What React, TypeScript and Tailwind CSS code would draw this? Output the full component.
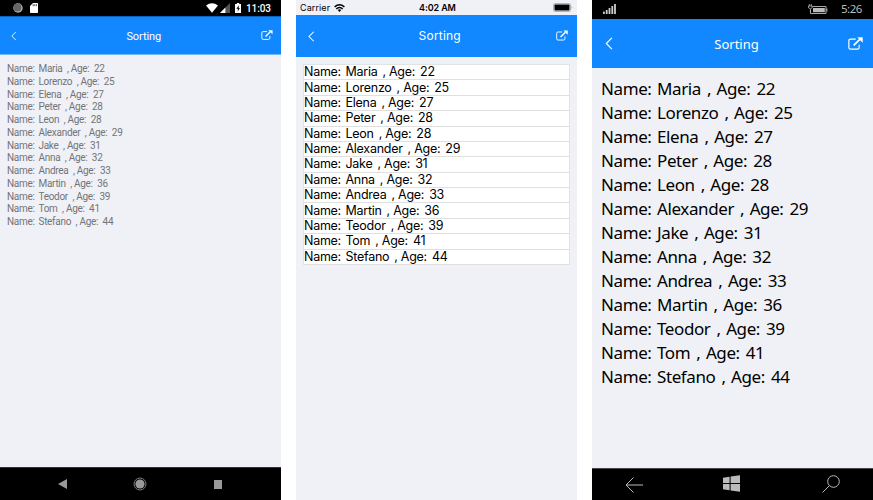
import React from "react";

const people: [string, number][] = [
  ["Maria", 22],
  ["Lorenzo", 25],
  ["Elena", 27],
  ["Peter", 28],
  ["Leon", 28],
  ["Alexander", 29],
  ["Jake", 31],
  ["Anna", 32],
  ["Andrea", 33],
  ["Martin", 36],
  ["Teodor", 39],
  ["Tom", 41],
  ["Stefano", 44],
];

function Back({ className }: { className: string }) {
  return (
    <svg viewBox="0 0 7 12" className={className} fill="none" stroke="white" strokeWidth="1.1">
      <path d="M6.2 0.8 L1 6 L6.2 11.2" />
    </svg>
  );
}

function External({ className }: { className: string }) {
  return (
    <svg viewBox="0 0 14 12" className={className} fill="none" stroke="white">
      <path
        d="M7.2 1.9 H2.4 Q0.8 1.9 0.8 3.4 V9.8 Q0.8 11.3 2.4 11.3 H8.9 Q10.4 11.3 10.4 9.8 V7.2"
        strokeWidth="1.1"
      />
      <path d="M5.3 7.8 L11 2.2" strokeWidth="1.7" />
      <path d="M8.6 0.2 H13.7 V5.2 Z" fill="white" stroke="none" />
    </svg>
  );
}

function AndroidPhone() {
  return (
    <section className="flex h-[500px] w-[281px] flex-col bg-[#eff1f6] font-['Roboto',sans-serif]">
      <div className="flex h-4 items-center bg-black pr-[11px] pl-[13px] text-white">
        <svg viewBox="0 0 10 10" className="h-[10px] w-[10px]">
          <circle cx="5" cy="5" r="4.7" fill="#b5b5b5" />
          <circle cx="4.4" cy="4.6" r="4" fill="#666" />
        </svg>
        <svg viewBox="0 0 8 10" className="ml-[7px] h-[10px] w-2">
          <path d="M3 0 H7.2 Q8 0 8 0.8 V9.2 Q8 10 7.2 10 H0.8 Q0 10 0 9.2 V3 Z" fill="white" />
          <path d="M3.2 1.2 V3.2 M4.8 1.2 V3.2 M6.4 1.2 V3.2" stroke="#111" strokeWidth="0.7" />
        </svg>
        <svg viewBox="0 0 12 10" className="ml-auto h-[10px] w-3">
          <path d="M0 2.4 Q6 -2 12 2.4 L6 9.8 Z" fill="white" />
        </svg>
        <svg viewBox="0 0 10 10" className="ml-[2px] h-[10px] w-[10px]">
          <path d="M10 0 V10 H0 Z" fill="#555" />
          <path d="M5.4 4.6 V10 H0 Z" fill="white" />
        </svg>
        <svg viewBox="0 0 6 10" className="ml-[5px] h-[10px] w-[6px]">
          <path d="M1.8 0 H4.2 V1 H6 V10 H0 V1 H1.8 Z" fill="white" />
          <path d="M3.8 2.4 L1.3 5.8 H2.8 V8.4 L4.9 5 H3.8 Z" fill="#111" />
        </svg>
        <span className="ml-[5px] w-[24px] pt-px text-[10px] leading-4 font-medium tracking-[-0.1px] whitespace-nowrap">
          11:03
        </span>
      </div>
      <header className="flex h-[39px] items-center border-t border-b border-t-[#0b62ba] border-b-[#72b7ff] bg-[#1188ff] pr-2 pl-[11px] text-white">
        <Back className="h-[10px] w-[5.5px]" />
        <h1 className="flex-1 pt-[2px] pl-[10px] text-center text-[11px] leading-4 tracking-[-0.1px]">Sorting</h1>
        <External className="mb-[2px] h-[10px] w-[12px]" />
      </header>
      <ul className="flex-1 pt-[8px] pl-[7px] text-[#737477]">
        {people.map(([name, age]) => (
          <li
            key={name}
            className="flex h-[12.75px] items-center text-[10px] leading-[12.75px] tracking-[-0.3px] whitespace-pre"
          >
            <span className="w-[31.5px]">Name:</span>
            <span>{name}</span>
            <span className="ml-[4.5px]">, Age:</span>
            <span className="ml-[4.5px]">{age}</span>
          </li>
        ))}
      </ul>
      <nav className="flex h-[33px] items-center border-t border-[#333] bg-black pl-[58px]">
        <svg viewBox="0 0 9 10" className="h-[10px] w-[9px]">
          <path d="M9 0 V10 L0 5 Z" fill="#999" />
        </svg>
        <svg viewBox="0 0 14 14" className="ml-[66px] h-[14px] w-[14px]">
          <circle cx="7" cy="7" r="6" fill="none" stroke="#999" strokeWidth="0.8" />
          <circle cx="7" cy="7" r="4.6" fill="#999" />
        </svg>
        <span className="ml-[67px] h-[9px] w-[8px] bg-[#999]" />
      </nav>
    </section>
  );
}

function IosPhone() {
  return (
    <section className="flex h-[500px] w-[281px] flex-col bg-[#eff1f6] font-['Inter',sans-serif]">
      <div className="flex h-[15px] items-center pr-[4px] pl-[4px] text-[9px] leading-[15px] text-black">
        <span className="w-[30px] tracking-[0.1px]">Carrier</span>
        <svg viewBox="0 0 11 8" className="ml-[4px] h-2 w-[11px]" fill="none" stroke="black" strokeWidth="1.5">
          <path d="M0.6 2.8 Q5.5 -1.2 10.4 2.8" />
          <path d="M2.3 4.9 Q5.5 2.1 8.7 4.9" />
          <path d="M3.7 6 Q5.5 4.7 7.3 6 L5.5 8 Z" fill="black" stroke="none" />
        </svg>
        <span className="ml-[74px] text-[9px] font-semibold tracking-[-0.1px] whitespace-nowrap">4:02 AM</span>
        <svg viewBox="0 0 20 9" className="ml-auto h-[9px] w-5">
          <rect x="0.5" y="0.5" width="17" height="8" rx="1.6" fill="none" stroke="#999" strokeWidth="0.7" />
          <rect x="1.5" y="1.5" width="15" height="6" rx="0.7" fill="black" />
          <path d="M18.6 3 Q20 4.5 18.6 6 Z" fill="#888" />
        </svg>
      </div>
      <header className="flex h-[42px] items-center bg-[#1188ff] pr-[9px] pl-[12px] text-white">
        <Back className="h-[11px] w-[6.5px]" />
        <h1 className="flex-1 pl-[9px] text-center text-[12px] leading-4 tracking-[0.2px]">Sorting</h1>
        <External className="mb-[2px] h-[11px] w-[12px]" />
      </header>
      <ul className="mx-[7px] mt-[7px] border-x border-t border-[#e2e3e5] bg-white text-black">
        {people.map(([name, age]) => (
          <li
            key={name}
            className="flex h-[15.38px] items-center border-b border-[#dfdfe0] text-[12.5px] leading-[14px] tracking-[-0.27px] whitespace-pre"
          >
            <span className="w-[41.5px]">Name:</span>
            <span>{name}</span>
            <span className="ml-[5px]">, Age:</span>
            <span className="ml-[5px]">{age}</span>
          </li>
        ))}
      </ul>
    </section>
  );
}

function WindowsPhone() {
  return (
    <section className="flex h-[500px] w-[281px] flex-col bg-[#eff1f6] font-['Noto_Sans',sans-serif]">
      <div className="flex h-[19px] items-center bg-black pr-[11px] pl-[11px] text-[#bbb]">
        <svg viewBox="0 0 13 10" className="mb-px h-[10px] w-[13px]" fill="#ccc">
          <rect x="0" y="7.6" width="1.8" height="2.4" />
          <rect x="2.8" y="6" width="1.8" height="4" />
          <rect x="5.6" y="4" width="1.8" height="6" />
          <rect x="8.4" y="2" width="1.8" height="8" />
          <rect x="11.1" y="0" width="1.8" height="10" />
        </svg>
        <svg viewBox="0 0 20 11" className="mb-px ml-auto h-[11px] w-5" fill="none" stroke="#bbb">
          <path d="M4.5 2.5 H18 V9.5 H2.5 V6" strokeWidth="0.9" />
          <rect x="5" y="4" width="11.8" height="4.2" fill="#bbb" stroke="none" />
          <path d="M18.9 4.5 V7.5" />
          <path d="M1.3 0 V2 M3.3 0 V2 M0.5 2 H4.2 V3.8 Q2.4 5.8 0.5 3.8 Z M2.4 5 V8" strokeWidth="0.8" />
        </svg>
        <span className="mb-px ml-[13px] w-[21px] text-[11.5px] leading-[18px] tracking-[-0.5px] whitespace-nowrap">5:26</span>
      </div>
      <header className="flex h-[49px] items-center bg-[#1188ff] pr-[10px] pl-[13px] text-white">
        <Back className="h-[13px] w-[8px]" />
        <h1 className="flex-1 pl-[12px] text-center text-[13px] leading-4">Sorting</h1>
        <External className="h-[13px] w-[15px]" />
      </header>
      <ul className="flex-1 pt-[9px] pl-[9px] text-black">
        {people.map(([name, age]) => (
          <li key={name} className="flex h-6 items-center text-[17px] leading-6 tracking-[-0.4px] whitespace-pre">
            <span className="w-[56px]">Name:</span>
            <span>{name}</span>
            <span className="ml-[6px]">,</span>
            <span className="ml-[5.5px]">Age:</span>
            <span className="ml-[6px]">{age}</span>
          </li>
        ))}
      </ul>
      <nav className="flex h-8 items-center border-t border-[#444] bg-black pl-[33px]">
        <svg viewBox="0 0 18 16" className="h-4 w-[18px]" fill="none" stroke="#bbb">
          <path d="M8.5 0.5 L1 8 L8.5 15.5 M1 8 H18" />
        </svg>
        <svg viewBox="0 0 17 17" className="mb-[2px] ml-[80px] h-[17px] w-[17px]" fill="#bbb">
          <path d="M0 2.7 L6.6 1.7 V8 H0 Z M7.6 1.5 L17 0.2 V8 H7.6 Z M0 9 H6.6 V15.2 L0 14.2 Z M7.6 9 H17 V16.8 L7.6 15.4 Z" />
        </svg>
        <svg viewBox="0 0 18 18" className="mb-px ml-[82px] h-[18px] w-[18px]" fill="none" stroke="#bbb">
          <circle cx="11.5" cy="6.5" r="5.8" />
          <path d="M7.3 10.7 L0.5 17.5" />
        </svg>
      </nav>
    </section>
  );
}

export default function App() {
  return (
    <main className="flex h-[500px] w-[873px] gap-[15px] overflow-hidden bg-white">
      <AndroidPhone />
      <IosPhone />
      <WindowsPhone />
    </main>
  );
}
